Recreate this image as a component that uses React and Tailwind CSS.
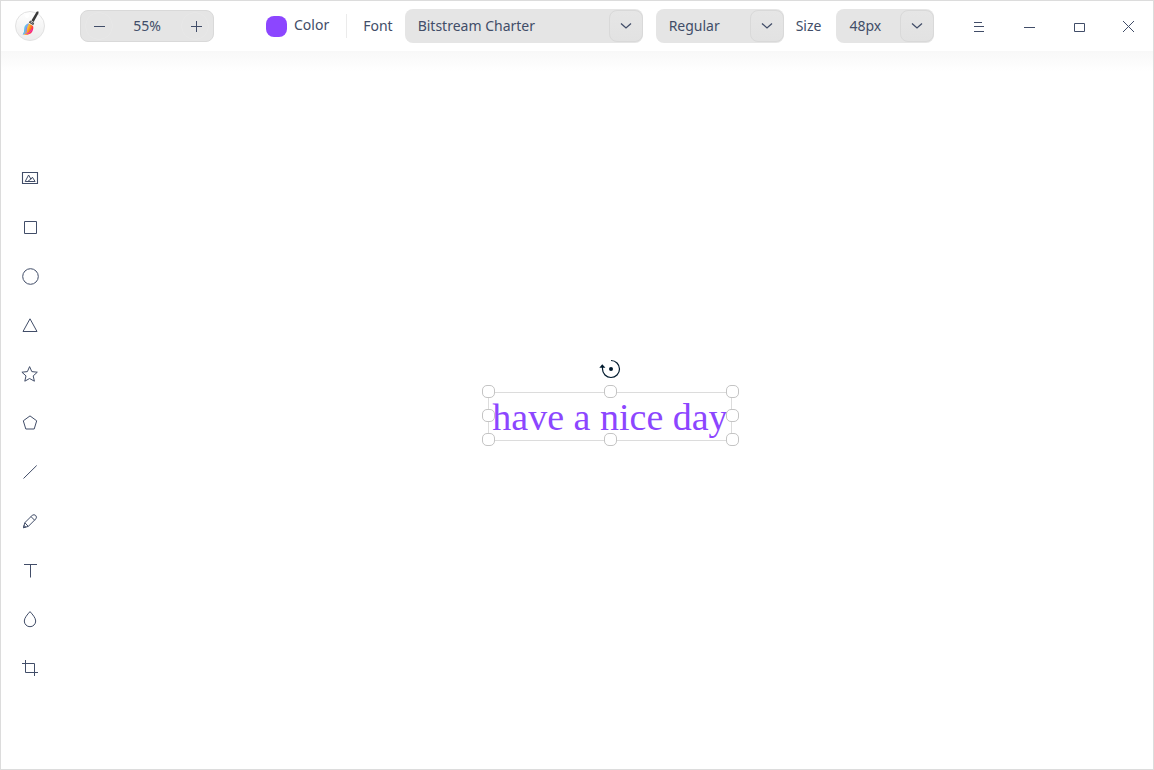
import React from "react";

function Icon({ size = 19, children, className = "" }) {
  return (
    <svg
      width={size}
      height={size}
      viewBox={`0 0 ${size} ${size}`}
      fill="none"
      stroke="currentColor"
      strokeWidth="1"
      aria-hidden="true"
      className={className}
    >
      {children}
    </svg>
  );
}

const tools = [
  {
    name: "Import image",
    icon: (
      <>
        <path d="M1.5 3.5h15v11h-15z" strokeWidth="1.1" />
        <path d="M4.2 12.5 7.6 6l2.3 4.2 1.500-2 2.700 4.300z" />
        <path d="m7 12.300 3.200-2.600" />
      </>
    ),
  },
  { name: "Rectangle", icon: <path d="M3.5 3.5h12v12h-12z" /> },
  { name: "Ellipse", icon: <circle cx="9.5" cy="9.5" r="7.8" /> },
  { name: "Triangle", icon: <path d="M9 2.8 16 15.5H2z" /> },
  {
    name: "Star",
    icon: <path d="m8.6 1.6 2.2 5 5.5.6-4.1 3.7 1.2 5.3-4.8-2.7-4.8 2.7L5 10.9.9 7.2l5.5-.6z" />,
  },
  { name: "Polygon", icon: <path d="m9 1.9 6.700 4.900-2.500 8.200H4.800L2.300 6.800z" /> },
  { name: "Line", icon: <path d="M2.5 15.5 15.7 2.5" /> },
  {
    name: "Pencil",
    icon: (
      <>
        <path d="m2.500 15.700 1.300-5 7.400-7.300q1.900-1.500 3.500.1t.1 3.400l-7.500 7.500z" />
        <path d="m3.800 10.700 3.500 3.700M10 4.600l3.600 3.600M2.500 15.700l2.200-.6-1.600-1.600z" />
      </>
    ),
  },
  { name: "Text", icon: <path d="M3 3.5h13M9.5 3.5V16.500" /> },
  {
    name: "Blur",
    icon: <path d="M9 1.6C6.4 4.5 3.3 8 3.3 11a5.7 5.7 0 0 0 11.4 0c0-3-3.1-6.5-5.7-9.4z" />,
  },
  { name: "Crop", icon: <path d="M1 4.5h12.5V17M4.5 1v12.5H17" /> },
];

const windowControls = [
  { name: "Menu", icon: <path d="M6 6.5h8M6 10.5h10M6 15.5h10" /> },
  { name: "Minimize", icon: <path d="M6 11.5h11" /> },
  { name: "Maximize", icon: <path d="M6.5 7.5h10v8h-10z" /> },
  { name: "Close", icon: <path d="m5 5 11 11M16 5 5 16" /> },
];

function Logo() {
  return (
    <svg width="32" height="32" viewBox="0 0 32 32" role="img" aria-label="Draw">
      <defs>
        <linearGradient id="disc" x1="0" y1="0" x2="0" y2="1">
          <stop offset="0" stopColor="#ffffff" />
          <stop offset="1" stopColor="#ececec" />
        </linearGradient>
        <linearGradient id="bristle" gradientUnits="userSpaceOnUse" x1="9.500" y1="17" x2="19" y2="21">
          <stop offset="0.1" stopColor="#4fd0ee" />
          <stop offset="0.3" stopColor="#8fa0e8" />
          <stop offset="0.42" stopColor="#ffc02e" />
          <stop offset="0.65" stopColor="#ff7a1c" />
          <stop offset="0.85" stopColor="#ff3548" />
          <stop offset="1" stopColor="#f02aa8" />
        </linearGradient>
      </defs>
      <circle cx="16" cy="16" r="14.5" fill="url(#disc)" stroke="#e2e2e2" />
      <circle cx="13" cy="6" r="2" fill="#ffffff" />
      <path d="M22.600 1.800 24.300 1.200l.3 1.700-4.900 9-2.300-1.500z" fill="#383838" />
      <path d="m16.200 10.500 4 2.600-1 2.100-4.400-2.700z" fill="#4a4a4a" />
      <path d="m16.600 12 2 1.300" stroke="#d8d8d8" strokeWidth="0.800" />
      <path
        d="M14.500 13.200c-3.700 1.400-4.300 3.700-4.300 6.300 0 2.200-.3 3.700-1.600 5 3.700 1 8 .2 9.600-2.700 1.100-2 1.500-4.100.8-5.800z"
        fill="url(#bristle)"
      />
      <path d="M10.800 19.500c0 2.200-.5 3.600-1.500 4.600" stroke="#4ccbe8" fill="none" />
      <path d="M12.500 17.500c-.3 2.500.1 4.500-1 6.500" stroke="#8c7cf0" fill="none" />
      <path d="M17.600 19.500c-.8 2.500-2.300 3.800-4.800 4.300" stroke="#ef2bd0" fill="none" />
    </svg>
  );
}

function Dropdown({ label, options, className }) {
  return (
    <div className={`relative h-[34px] ${className}`}>
      <select
        aria-label={label}
        className="h-full w-full appearance-none rounded-lg bg-[#e5e5e5] pr-9 pl-[13px] outline-none"
      >
        {options.map((option) => (
          <option key={option}>{option}</option>
        ))}
      </select>
      <span className="pointer-events-none absolute inset-y-px right-0 flex w-[34px] items-center justify-center rounded-lg border border-[#d9d9d9] bg-linear-to-b from-[#e6e6e6] to-[#e2e2e2]">
        <svg width="12" height="8" viewBox="0 0 12 8" fill="none" stroke="currentColor" strokeWidth="1.3" aria-hidden="true">
          <path d="m1 1.500 5 4.500 5-4.500" />
        </svg>
      </span>
    </div>
  );
}

function Toolbar() {
  return (
    <header className="flex h-[50px] shrink-0 items-center bg-white">
      <div className="ml-[13px] shrink-0">
        <Logo />
      </div>

      <div className="ml-[34px] flex h-8 w-[134px] shrink-0 items-center justify-between rounded-lg border border-[#d9d9d9] bg-[#e5e5e5] px-1">
        <button type="button" aria-label="Zoom out" className="grid size-7 place-items-center rounded-full border border-[#e8e8e8]">
          <Icon size={14}>
            <path d="M2 7.5h11" />
          </Icon>
        </button>
        <output>55%</output>
        <button type="button" aria-label="Zoom in" className="grid size-7 place-items-center rounded-full border border-[#e8e8e8]">
          <Icon size={14}>
            <path d="M3 7.5h11M8.5 2v11" />
          </Icon>
        </button>
      </div>

      <button type="button" className="ml-[52px] flex shrink-0 items-center gap-[7px]">
        <span className="size-[21px] rounded-lg bg-[#8c46ff]" />
        <span className="pb-0.5">Color</span>
      </button>
      <span className="mr-4 ml-[17px] h-6 w-px shrink-0 bg-[#ebebeb]" />

      <span className="mr-3 shrink-0">Font</span>
      <Dropdown label="Font" options={["Bitstream Charter"]} className="mr-[13px] w-[238px]" />
      <Dropdown label="Font style" options={["Regular"]} className="mr-3 w-32 shrink-0" />
      <span className="mr-[15px] shrink-0">Size</span>
      <Dropdown label="Size" options={["48px"]} className="w-[98px] shrink-0" />

      <div className="ml-auto flex h-full shrink-0">
        {windowControls.map((control) => (
          <button key={control.name} type="button" aria-label={control.name} className="grid w-[50px] place-items-center">
            <Icon size={20}>{control.icon}</Icon>
          </button>
        ))}
      </div>
    </header>
  );
}

const handles = [
  "left-0 top-0",
  "left-1/2 top-0",
  "left-full top-0",
  "left-0 top-1/2",
  "left-full top-1/2",
  "left-0 top-full",
  "left-1/2 top-full",
  "left-full top-full",
];

function SelectedText() {
  return (
    <div className="absolute top-[340px] left-[428px] h-12 w-[244px]">
      <svg width="22" height="20" viewBox="0 0 22 20" fill="none" className="absolute -top-8 left-1/2 -translate-x-1/2" aria-hidden="true">
        <path d="M12 1.500a8.500 8.500 0 1 1-8.500 8.500V8" stroke="#001a2e" strokeWidth="1.200" />
        <path d="M.3 8.800 3.300 5.200l3.100 3.600z" fill="#001a2e" />
        <circle cx="12" cy="10" r="2" fill="#001a2e" />
      </svg>
      <p className="mt-px h-[49px] border border-[#dcdcdc] text-center font-['Bitstream_Charter','Liberation_Serif',serif] text-[38px] leading-[48px] whitespace-nowrap text-[#8c46ff]">
        have a nice day
      </p>
      {handles.map((place) => (
        <span
          key={place}
          className={`absolute -mt-1.5 -ml-1.5 size-[13px] rounded-[5px] border border-[#c4c4c4] bg-white ${place}`}
        />
      ))}
    </div>
  );
}

export default function App() {
  return (
    <div className="flex min-h-screen flex-col border border-[#dcdcdc] bg-white font-['Noto_Sans',sans-serif] text-sm leading-5 text-[#414d68]">
      <Toolbar />
      <div className="flex flex-1 bg-linear-to-b from-[#f8f8f8] to-white to-[20px]">
        <nav aria-label="Tools" className="flex w-[59px] shrink-0 flex-col pt-[103px]">
          {tools.map((tool) => (
            <button key={tool.name} type="button" aria-label={tool.name} className="grid h-[49px] place-items-center">
              <Icon>{tool.icon}</Icon>
            </button>
          ))}
        </nav>
        <main className="relative flex-1">
          <SelectedText />
        </main>
      </div>
    </div>
  );
}
